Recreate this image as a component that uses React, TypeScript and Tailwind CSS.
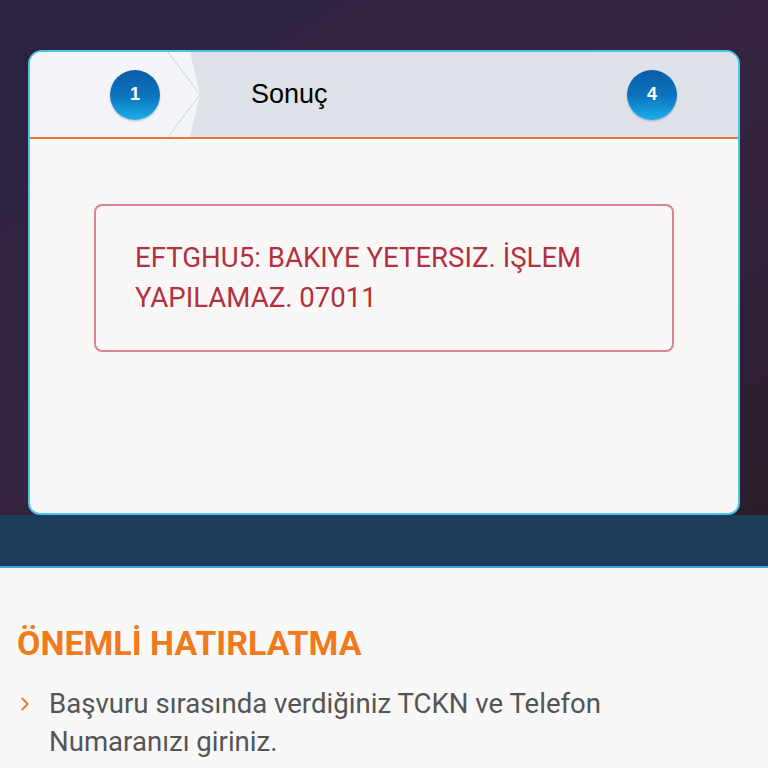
import { ChevronRight } from "lucide-react";

function StepCircle({ n }: { n: number }) {
  return (
    <div className="flex h-[50px] w-[50px] items-center justify-center rounded-full bg-gradient-to-b from-[#0a5ea6] via-[#0c72bd] to-[#1cb0ec] font-['Liberation_Sans',Arial,sans-serif] text-[18px] font-bold text-white shadow-[0_1px_2px_rgba(0,0,0,0.25)]">
      {n}
    </div>
  );
}

export default function App() {
  return (
    <div className="min-h-[768px] w-full overflow-hidden bg-[#f8f8f8] font-['Roboto',sans-serif]">
      {/* mor arka plan + kart */}
      <div className="bg-gradient-to-br from-[#2a2240] via-[#342440] to-[#2b1e2c] px-[28px] pt-[50px]">
        <div className="overflow-hidden rounded-t-[14px] rounded-b-[12px] border-2 border-[#4cc4ec] bg-[#f9f8f7]">
          {/* adımlar */}
          <div className="flex h-[87px] border-b-2 border-[#e8782c] bg-[#dde3e9]">
            <div className="relative flex w-[160px] items-center bg-[#f3f5f8] pl-[80px]">
              <StepCircle n={1} />
              <svg
                className="absolute top-0 right-[-10px] h-full w-[32px]"
                viewBox="0 0 32 85"
                preserveAspectRatio="none"
              >
                <path d="M22 0 L32 42.5 L22 85 Z" fill="#f3f5f8" />
                <path d="M0 0 L32 42.5 L0 85" fill="none" stroke="#cfd4da" strokeWidth="1" />
              </svg>
            </div>
            <div className="flex flex-1 items-center justify-between pl-[61px] pr-[61px]">
              <span className="font-['Liberation_Sans',Arial,sans-serif] text-[27px] text-black">Sonuç</span>
              <StepCircle n={4} />
            </div>
          </div>

          {/* hata kutusu */}
          <div className="h-[374px] px-[64px] pt-[65px]">
            <div className="rounded-[8px] border-2 border-[#da8590] px-[39px] pt-[32px] pb-[32px] text-[27.6px] leading-[40px] text-[#b3303e]">
              EFTGHU5: BAKIYE YETERSIZ. İŞLEM YAPILAMAZ. 07011
            </div>
          </div>
        </div>
      </div>

      {/* koyu bant */}
      <div className="h-[53px] border-b-2 border-[#3aa6da] bg-[#1d3c5a]" />

      {/* hatırlatma */}
      <div className="px-[17px] pt-[55px]">
        <h2 className="text-[34px] leading-[40px] font-bold text-[#f07a1c]">ÖNEMLİ HATIRLATMA</h2>
        <div className="mt-[22px] flex">
          <ChevronRight className="mt-[8px] -ml-[3px] h-[22px] w-[22px] shrink-0 text-[#f07a1c]" strokeWidth={2} />
          <p className="ml-[13px] text-[27.6px] leading-[38px] text-[#555555]">
            Başvuru sırasında verdiğiniz TCKN ve Telefon
            <br />
            Numaranızı giriniz.
          </p>
        </div>
      </div>
    </div>
  );
}
